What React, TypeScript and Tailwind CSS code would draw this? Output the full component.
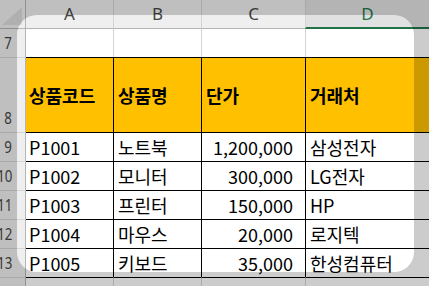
import React from "react";

const rows = [
  ["9", "P1001", "노트북", "1,200,000", "삼성전자"],
  ["10", "P1002", "모니터", "300,000", "LG전자"],
  ["11", "P1003", "프린터", "150,000", "HP"],
  ["12", "P1004", "마우스", "20,000", "로지텍"],
  ["13", "P1005", "키보드", "35,000", "한성컴퓨터"],
];

const font = { fontFamily: '"Noto Sans CJK KR", "Noto Sans", sans-serif' };
const hdrFont = { fontFamily: '"Noto Sans", "Noto Sans CJK KR", sans-serif' };

function RowNum({ n }: { n: string }) {
  return <span className="inline-block scale-x-[0.78] origin-right">{n}</span>;
}

export default function App() {
  return (
    <div className="relative w-[429px] h-[286px] overflow-hidden bg-white text-black" style={font}>
      {/* column header */}
      <div className="flex h-[29px] bg-[#efefef] text-[17px] text-[#444]" style={hdrFont}>
        <div className="w-[26px] shrink-0 border-r border-b border-[#b5b5b5] flex items-end justify-end pr-[3px] pb-[3px]">
          <svg width="20" height="18" viewBox="0 0 20 18">
            <polygon points="0,18 20,18 20,0" fill="#dcdcdc" />
          </svg>
        </div>
        <div className="w-[87px] shrink-0 border-b border-[#b5b5b5] flex items-center justify-center">A</div>
        <div className="w-[88px] shrink-0 border-l border-l-[#d4d4d4] border-b border-b-[#b5b5b5] flex items-center justify-center">B</div>
        <div className="w-[104px] shrink-0 border-l border-l-[#d4d4d4] border-b border-b-[#b5b5b5] flex items-center justify-center">C</div>
        <div className="w-[130px] shrink-0 bg-[#e1e1e1] border-l border-l-[#d4d4d4] border-b-2 border-b-[#217346] flex items-center justify-center pr-[6px] text-[#217346]">D</div>
      </div>
      {/* row 7 */}
      <div className="flex h-[28px]">
        <div className="w-[26px] shrink-0 bg-[#efefef] border-r border-[#b5b5b5] flex items-center justify-end pr-[13px] text-[17px] text-[#444]" style={hdrFont}><RowNum n="7" /></div>
        <div className="w-[87px] shrink-0" />
        <div className="w-[88px] shrink-0 border-l border-[#d4d4d4]" />
        <div className="w-[104px] shrink-0 border-l border-[#d4d4d4]" />
        <div className="w-[130px] shrink-0 border-l border-[#d4d4d4]" />
      </div>
      {/* row 8 header */}
      <div className="flex h-[75px]">
        <div className="w-[26px] shrink-0 bg-[#efefef] border-r border-r-[#b5b5b5] border-t border-t-[#d4d4d4] flex items-end justify-end pr-[13px] pb-[2px] text-[17px] text-[#444]" style={hdrFont}><RowNum n="8" /></div>
        <div className="w-[87px] shrink-0 bg-[#ffc000] border-t border-black flex items-center pl-[3px] text-[18px] font-bold">상품코드</div>
        <div className="w-[88px] shrink-0 bg-[#ffc000] border-t border-l border-black flex items-center pl-[4px] text-[18px] font-bold">상품명</div>
        <div className="w-[104px] shrink-0 bg-[#ffc000] border-t border-l border-black flex items-center pl-[4px] text-[18px] font-bold">단가</div>
        <div className="w-[130px] shrink-0 bg-[#ffc000] border-t border-l border-black flex items-center pl-[4px] text-[18px] font-bold">거래처</div>
      </div>
      {rows.map((r) => (
        <div key={r[0]} className="flex h-[29px]">
          <div className="w-[26px] shrink-0 bg-[#efefef] border-r border-r-[#b5b5b5] border-t border-t-[#d4d4d4] flex items-center justify-end pr-[13px] text-[17px] text-[#444]" style={hdrFont}><RowNum n={r[0]} /></div>
          <div className="w-[87px] shrink-0 border-t border-black flex items-center pl-[3px] text-[18px]">{r[1]}</div>
          <div className="w-[88px] shrink-0 border-t border-l border-black flex items-center pl-[4px] text-[18px]">{r[2]}</div>
          <div className="w-[104px] shrink-0 border-t border-l border-black flex items-center justify-end pr-[12px] text-[18px]">{r[3]}</div>
          <div className="w-[130px] shrink-0 border-t border-l border-black flex items-center pl-[4px] text-[18px]">{r[4]}</div>
        </div>
      ))}
      {/* row 14 */}
      <div className="flex h-[29px]">
        <div className="w-[26px] shrink-0 bg-[#efefef] border-r border-r-[#b5b5b5] border-t border-t-[#d4d4d4]" />
        <div className="w-[87px] shrink-0 border-t border-black" />
        <div className="w-[88px] shrink-0 border-t border-t-black border-l border-l-[#d4d4d4]" />
        <div className="w-[104px] shrink-0 border-t border-t-black border-l border-l-[#d4d4d4]" />
        <div className="w-[130px] shrink-0 border-t border-t-black border-l border-l-[#d4d4d4]" />
      </div>
      {/* spotlight overlay */}
      <div className="pointer-events-none absolute left-[17px] top-[15px] w-[397px] h-[257px] rounded-[20px] shadow-[0_0_0_1000px_rgba(0,0,0,0.2)]" />
    </div>
  );
}
